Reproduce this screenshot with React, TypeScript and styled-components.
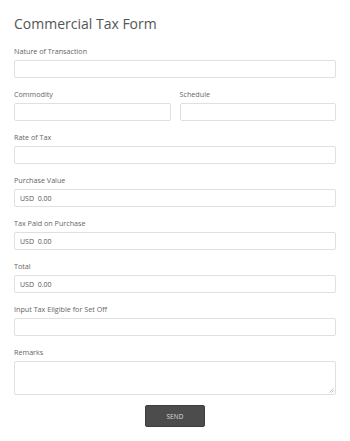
import React from "react";
import styled, { createGlobalStyle } from "styled-components";

const Global = createGlobalStyle`
  html, body { margin: 0; padding: 0; background: #fff; }
  body { font-family: "Open Sans", "Liberation Sans", sans-serif; }
  * { box-sizing: border-box; }
`;

const Page = styled.form`
  padding: 13px 14px 14px 14px;
  display: flex;
  flex-direction: column;
`;

const Title = styled.h1`
  margin: 0 0 11px 0;
  font-size: 14px;
  line-height: 22px;
  font-weight: 400;
  color: #555;
`;

const Field = styled.div`
  display: flex;
  flex-direction: column;
  gap: 4px;
  margin-bottom: 11px;
  flex: 1;
  min-width: 0;
`;

const Row = styled.div`
  display: flex;
  gap: 9px;
`;

const Label = styled.label`
  font-size: 7.2px;
  line-height: 10px;
  color: #666;
`;

const Input = styled.div<{ $tall?: boolean }>`
  height: ${(p) => (p.$tall ? "34px" : "18px")};
  border: 1px solid #e0e0e0;
  border-radius: 2px;
  background: #fff;
  font-size: 7px;
  color: #555;
  display: flex;
  align-items: center;
  padding-left: 5px;
  position: relative;
  white-space: pre;
`;

const Grip = styled.svg`
  position: absolute;
  right: 1px;
  bottom: 1px;
`;

const Send = styled.button`
  align-self: center;
  margin-top: -1px;
  width: 60px;
  height: 22px;
  border: 1px solid #3e3e3e;
  border-radius: 2px;
  background: #4c4c4c;
  color: #ddd;
  font-family: "Open Sans", "Liberation Sans", sans-serif;
  font-size: 6.3px;
  letter-spacing: 0.2px;
  padding: 0;
`;

function F({ label, value, tall }: { label: string; value?: string; tall?: boolean }) {
  return (
    <Field>
      <Label>{label}</Label>
      <Input $tall={tall}>
        {value}
        {tall && (
          <Grip width="5" height="5" viewBox="0 0 5 5">
            <path d="M4.5 0.5 L0.5 4.5 M4.5 2.5 L2.5 4.5" stroke="#999" strokeWidth="0.6" />
          </Grip>
        )}
      </Input>
    </Field>
  );
}

export default function App() {
  return (
    <>
      <Global />
      <Page onSubmit={(e) => e.preventDefault()}>
        <Title>Commercial Tax Form</Title>
        <F label="Nature of Transaction" />
        <Row>
          <F label="Commodity" />
          <F label="Schedule" />
        </Row>
        <F label="Rate of Tax" />
        <F label="Purchase Value" value="USD  0.00" />
        <F label="Tax Paid on Purchase" value="USD  0.00" />
        <F label="Total" value="USD  0.00" />
        <F label="Input Tax Eligible for Set Off" />
        <F label="Remarks" tall />
        <Send type="submit">SEND</Send>
      </Page>
    </>
  );
}
